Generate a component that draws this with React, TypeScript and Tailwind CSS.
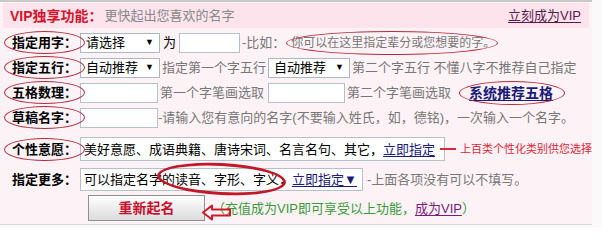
import React from 'react';

// --- Small building blocks ---

const Ellipse: React.FC<{ className: string }> = ({ className }) => (
  <span className={`pointer-events-none absolute rounded-[50%] border-[#b42a3c] ${className}`} />
);

const Label: React.FC<{ text: string; ring?: boolean }> = ({ text, ring = true }) => (
  <div className="flex w-[80px] shrink-0 items-center pl-[12px]">
    <span className="relative text-[13px] font-bold text-black">
      {text}
      {ring && <Ellipse className="-inset-x-[8px] -inset-y-[5px] border-[1.5px]" />}
    </span>
  </div>
);

const FakeSelect: React.FC<{ text: string; width: string }> = ({ text, width }) => (
  <div
    className={`flex h-[20px] ${width} shrink-0 items-center justify-between border border-[#a9b8c4] bg-white pl-[5px] pr-[5px] text-[13px] text-black`}
  >
    <span>{text}</span>
    <span className="text-[9px]">▼</span>
  </div>
);

const Box: React.FC<{ width: string }> = ({ width }) => (
  <div className={`h-[20px] ${width} shrink-0 border border-[#b3c1cc] bg-white`} />
);

const Gray: React.FC<{ children: React.ReactNode; className?: string }> = ({ children, className = '' }) => (
  <span className={`whitespace-nowrap text-[13px] text-[#777] ${className}`}>{children}</span>
);

// --- Main Component ---

export default function App() {
  return (
    <div className="h-[228px] w-[602px] overflow-hidden bg-[#fbf9fa] font-['Liberation_Sans','Noto_Sans_CJK_SC',sans-serif] leading-none">
      <div className="w-[592px] border-t-2 border-[#c9c9c9] bg-[#fdf3f6]">
        {/* Header */}
        <div className="mx-[3px] mt-[1px] flex h-[25px] items-center justify-between bg-[#fde4ec] pl-[7px] pr-[8px]">
          <div className="flex items-center">
            <span className="text-[14px] font-bold text-[#d4132b]">VIP独享功能：</span>
            <span className="ml-[2px] text-[13px] text-[#888]">更快起出您喜欢的名字</span>
          </div>
          <a className="text-[13px] text-[#5a1a4a] underline underline-offset-2">立刻成为VIP</a>
        </div>

        <div className="pt-[2px]">
          {/* 指定用字 */}
          <div className="flex h-[25px] items-center">
            <Label text="指定用字：" />
            <FakeSelect text="请选择" width="w-[80px]" />
            <span className="mx-[3px] text-[13px] text-black">为</span>
            <Box width="w-[61px]" />
            <Gray className="ml-[2px]">-比如：</Gray>
            <span className="relative ml-[6px] whitespace-nowrap text-[12px] text-[#777]">
              你可以在这里指定辈分或您想要的字。
              <Ellipse className="-left-[5px] -right-[3px] -inset-y-[6px] border-[1.5px]" />
            </span>
          </div>

          {/* 指定五行 */}
          <div className="flex h-[25px] items-center">
            <Label text="指定五行：" />
            <FakeSelect text="自动推荐" width="w-[80px]" />
            <Gray className="ml-[2px] w-[106px]">指定第一个字五行</Gray>
            <FakeSelect text="自动推荐" width="w-[82px]" />
            <Gray className="ml-[2px]">第二个字五行 不懂八字不推荐自己指定</Gray>
          </div>

          {/* 五格数理 */}
          <div className="flex h-[25px] items-center">
            <Label text="五格数理：" />
            <Box width="w-[78px]" />
            <Gray className="ml-[2px] w-[108px]">第一个字笔画选取</Gray>
            <Box width="w-[77px]" />
            <Gray className="ml-[2px]">第二个字笔画选取</Gray>
            <span className="relative ml-[18px] whitespace-nowrap text-[14px] font-bold text-[#1a1a7a] underline underline-offset-2">
              系统推荐五格
              <Ellipse className="-left-[10px] -right-[12px] -inset-y-[5px] border-[1.5px] border-[#a0203a]" />
            </span>
          </div>

          {/* 草稿名字 */}
          <div className="flex h-[25px] items-center">
            <Label text="草稿名字：" />
            <Box width="w-[78px]" />
            <Gray>-请输入您有意向的名字(不要输入姓氏，如，德铭)，一次输入一个名字。</Gray>
          </div>

          {/* 个性意愿 */}
          <div className="mt-[6px] flex h-[26px] items-center">
            <Label text="个性意愿：" />
            <div className="flex h-[24px] w-[365px] shrink-0 items-center border border-[#b3c1cc] bg-white pl-[3px] text-[13px] text-black">
              美好意愿、成语典籍、唐诗宋词、名言名句、其它，
              <a className="text-[#1a1a7a] underline underline-offset-2">立即指定</a>
            </div>
            <span className="ml-[-5px] h-[2px] w-[18px] bg-[#d8283a]" />
            <span className="ml-[4px] whitespace-nowrap text-[11px] text-[#d8283a]">上百类个性化类别供您选择</span>
          </div>

          {/* 指定更多 */}
          <div className="mt-[2px] flex h-[30px] items-center">
            <Label text="指定更多：" ring={false} />
            <div className="flex h-[23px] w-[283px] shrink-0 items-center border border-[#b3c1cc] bg-white pl-[3px] text-[13px] text-black">
              可以指定名字
              <span className="relative">
                的读音、字形、字义
                <Ellipse className="-left-[5px] -right-[7px] -top-[10px] -bottom-[9px] rotate-[3deg] border-[3px] border-[#c01a2a]" />
              </span>
              ，
              <a className="text-[#1a1a7a] underline underline-offset-2">立即指定▼</a>
            </div>
            <Gray className="ml-[4px]">-上面各项没有可以不填写。</Gray>
          </div>

          {/* 按钮 */}
          <div className="flex h-[28px] items-center">
            <button className="ml-[88px] h-[26px] w-[117px] shrink-0 border border-[#8f8f8f] bg-gradient-to-b from-white to-[#dcdcdc] text-[14px] font-bold text-[#c8102e]">
              重新起名
            </button>
            <div className="relative flex items-center">
              <svg width="30" height="17" viewBox="0 0 30 17" className="absolute left-[-3px] top-[2px]">
                <polygon
                  points="1,8.5 10,1.5 10,5.5 28,5.5 28,11.5 10,11.5 10,15.5"
                  fill="none"
                  stroke="#d01a2a"
                  strokeWidth="2"
                  strokeLinejoin="round"
                />
              </svg>
              <span className="ml-[7px] whitespace-nowrap text-[13px] text-[#3a9a3a]">
                （充值成为VIP即可享受以上功能，
                <a className="text-[#7a1a7a] underline underline-offset-2">成为VIP</a>）
              </span>
            </div>
          </div>
        </div>
        <div className="mt-[2px] h-[1px] bg-[#d8d8d8]" />
      </div>
    </div>
  );
}
